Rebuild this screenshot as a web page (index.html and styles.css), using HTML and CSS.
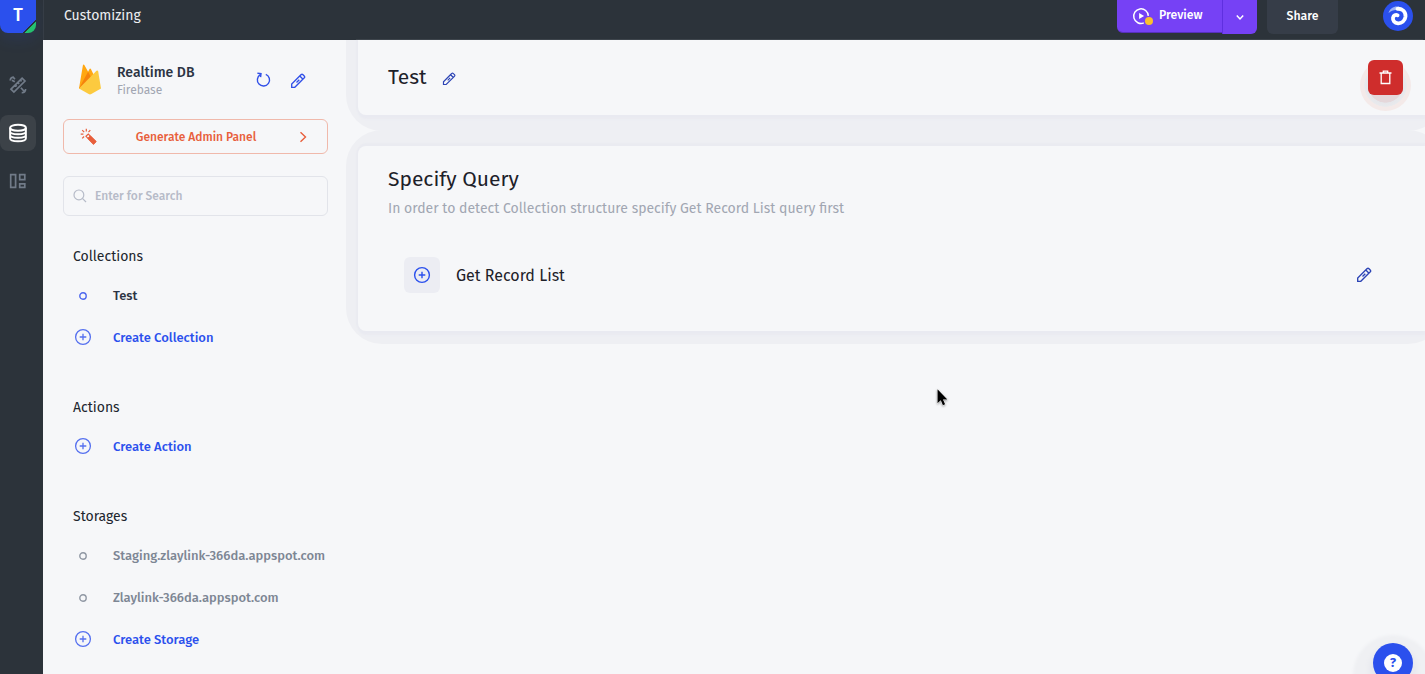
FILE: index.html
```html
<!DOCTYPE html>
<html lang="en">
<head>
<meta charset="utf-8">
<title>Customizing</title>
<link rel="stylesheet" href="styles.css">
</head>
<body>
<svg class="defs" aria-hidden="true">
  <symbol id="plus" viewBox="0 0 18 18"><circle cx="9" cy="9" r="7.4"/><path d="M9 5.700v6.600M5.700 9h6.600"/></symbol>
  <symbol id="bullet" viewBox="0 0 8 8"><circle cx="4" cy="4" r="3.200"/></symbol>
  <symbol id="pencil" viewBox="0 0 16 16"><path d="M1.700 14.300v-3.200L10.200 2.600l1-1q.9-.7 1.800.2l1.200 1.200q.9.900.1 1.800l-1 1-8.500 8.500zM9.800 3.100l3.200 3.200M6.500 9.500l2.800-2.800"/></symbol>
</svg>
<div class="app">
  <nav class="rail">
    <div class="logo"><span class="t">T</span></div>
    <a class="rail-item"><svg width="18" height="18" viewBox="0 0 18 18"><path d="M2 13.200 13.100 2.100l2.900 2.900L4.900 16.100zM6.500 9.100l1.200 1.200M9 6.600l1.200 1.200M11.400 4.200l1.200 1.200M5.800 5.800 2.900 4.200M1.200 4.500q.2-3 3-3.300l1.700 2.100M11.900 11.800l3.200 3.500M12.700 16.700q3.800.2 3.900-3.700"/></svg></a>
    <a class="rail-item active"><svg width="20" height="20" viewBox="0 0 20 20"><ellipse cx="10" cy="4.700" rx="7.900" ry="3"/><path d="M2.100 4.700v10.600c0 4 15.800 4 15.800 0V4.700M2.100 8.200c0 4 15.800 4 15.800 0M2.100 11.800c0 4 15.800 4 15.800 0"/></svg></a>
    <a class="rail-item"><svg width="18" height="16" viewBox="0 0 18 16"><path d="M1.700 1.700h4.900v12.600H1.700zM10.700 1.700h5.100v5h-5.100zM10.700 10.800h5.100v3.500h-5.100z"/></svg></a>
  </nav>
  <div class="main">
    <header class="topbar">
      <span class="crumb">Customizing</span>
      <div class="preview">
        <div class="preview-main">
          <svg width="22" height="20" viewBox="0 0 22 20"><path class="ring" d="M11.800 15.900A7.300 7.300 0 1 1 16.300 8.900"/><path class="play" d="M7.100 6v6l5-3z"/><circle class="dot" cx="17" cy="14" r="4"/></svg>
          <span class="t">Preview</span>
        </div>
        <div class="preview-more"><svg width="10" height="7" viewBox="0 0 10 7"><path d="M1.800 1.400 5 4.900l3.200-3.500"/></svg></div>
      </div>
      <div class="share">Share</div>
      <svg class="avatar" width="30" height="30" viewBox="0 0 30 30"><circle cx="15" cy="15" r="15" fill="#2b50ed"/><path fill="#9db3f8" d="M5.500 12.200C7.500 5.500 14 4 19 7.200L18 10.500C14 8 9 9 5.500 12.200z"/><path class="swirl" d="M14.500 7.800C19.500 7.300 22.800 11 22.500 15.500 22 20 18.500 22.500 15 22.300 11.500 22 9.600 19.500 10 16.700c.4-2.400 2.800-3.400 4.600-2.400"/></svg>
    </header>
    <div class="body">
      <aside class="panel">
        <div class="source">
          <svg class="fire" width="22" height="31" viewBox="0 0 22 31"><path fill="#ffa712" d="M0 24.500 3.900 1.200q.6-1.400 1.600 0l3.600 6.500 1.400-2.800q.7-1 1.400 0L21 24z"/><path fill="#f5820d" d="M0 24.500 9.100 7.700l3.500 6.600z"/><path fill="#fcca3f" d="M0 24.500 17.500 6.700q1.300-.8 1.700.8L22 24.500l-9.700 5.600q-1.300.7-2.600 0z"/></svg>
          <div class="source-text"><span class="source-name">Realtime DB</span><span class="source-type">Firebase</span></div>
          <svg class="reload" width="16" height="16" viewBox="0 0 16 16"><path d="M10.800 2.300A6.100 6.100 0 1 1 5.300 2.700M2.400 1.300 6 1.600 5.600 5.200"/></svg>
          <svg class="pencil" width="16" height="16"><use href="#pencil"/></svg>
        </div>
        <div class="generate">
          <svg class="wand" width="17" height="17" viewBox="0 0 17 17"><path d="m6 8.300 2.300-2.200 7.400 7.500-2.200 2.200zM8.200 10.400l2.200-2.100"/><path class="solid" d="m10.500 8.400 5.200 5.200-2.200 2.200-5.200-5.200z"/><path d="M6.300.7v2.700M.7 6.200h2.700M2.200 2.100l2 2M10.300 2.100l-1.800 2M2.200 10.400l1.900-1.900"/></svg>
          <span class="t">Generate Admin Panel</span>
          <svg class="chev" width="8" height="12" viewBox="0 0 8 12"><path d="m1.500 1.200 5 4.800-5 4.800"/></svg>
        </div>
        <div class="search"><svg width="14" height="14" viewBox="0 0 14 14"><circle cx="5.900" cy="5.900" r="4.900"/><path d="m9.400 9.400 3.600 3.600"/></svg><span class="t">Enter for Search</span></div>
        <section class="group">
          <h3>Collections</h3>
          <div class="row dark"><svg class="bullet" width="8" height="8"><use href="#bullet"/></svg><span class="t">Test</span></div>
          <div class="row create"><svg width="18" height="18"><use href="#plus"/></svg><span class="t">Create Collection</span></div>
        </section>
        <section class="group">
          <h3>Actions</h3>
          <div class="row create"><svg width="18" height="18"><use href="#plus"/></svg><span class="t">Create Action</span></div>
        </section>
        <section class="group">
          <h3>Storages</h3>
          <div class="row"><svg class="bullet" width="8" height="8"><use href="#bullet"/></svg><span class="t">Staging.zlaylink-366da.appspot.com</span></div>
          <div class="row"><svg class="bullet" width="8" height="8"><use href="#bullet"/></svg><span class="t">Zlaylink-366da.appspot.com</span></div>
          <div class="row create"><svg width="18" height="18"><use href="#plus"/></svg><span class="t">Create Storage</span></div>
        </section>
      </aside>
      <main class="content">
        <div class="card title-card">
          <h1>Test</h1>
          <svg class="pencil deep" width="14" height="14"><use href="#pencil"/></svg>
          <div class="delete"><svg width="13" height="15" viewBox="0 0 13 15"><path d="M.5 3h12M4.300 2.600V1.200h4.400v1.400M2.200 3.200v10.300h8.600V3.200"/></svg></div>
        </div>
        <div class="card query-card">
          <h2>Specify Query</h2>
          <p>In order to detect Collection structure specify Get Record List query first</p>
          <div class="query">
            <span class="tile"><svg width="18" height="18"><use href="#plus"/></svg></span>
            <span class="t">Get Record List</span>
            <svg class="pencil deep" width="16" height="16"><use href="#pencil"/></svg>
          </div>
        </div>
      </main>
    </div>
  </div>
  <div class="help"><span>?</span></div>
  <svg class="cursor" width="13" height="19" viewBox="0 0 13 19"><path d="M1.500 1.200v14l3.300-2.900 2.100 4.900 2.200-1-2.100-4.700h4.400z"/></svg>
</div>
</body>
</html>
```
FILE: styles.css
```css
* { box-sizing: border-box; }
body { margin: 0; font-family: "Fira Sans", "Open Sans", "Noto Sans", sans-serif; color: #1d2129; }
h1, h2, h3, p { margin: 0; font-weight: 400; }
svg { flex: none; fill: none; }
.defs { position: absolute; width: 0; height: 0; }
.t { white-space: nowrap; }
.app { position: relative; display: flex; width: 100%; height: 674px; overflow: hidden; background: #f6f7f9; }

.rail { width: 43px; flex: none; display: flex; flex-direction: column; align-items: flex-start; gap: 12px; background: #2c333a; }
.logo { width: 36px; height: 33px; margin-bottom: 22px; border-radius: 0 0 8px 8px; display: flex; align-items: center; justify-content: center; color: #fff; font-size: 18px; font-weight: 500; line-height: 24px; padding-bottom: 3px; background: linear-gradient(135deg, #2b50ed 80%, #2c333a 80%, #2c333a 84%, #25c16f 84%); box-shadow: 0 6px 16px rgba(43, 80, 237, .12); }
.rail-item { width: 36px; height: 36px; border-radius: 8px; display: flex; align-items: center; justify-content: center; }
.rail-item svg { stroke: #717b88; stroke-width: 1.7; }
.rail-item.active { background: #3c4248; }
.rail-item.active svg { stroke: #fff; stroke-width: 1.9; }

.main { flex: 1; min-width: 0; display: flex; flex-direction: column; }
.topbar { height: 40px; flex: none; display: flex; align-items: flex-start; background: #2c333a; color: #fff; border-left: 1px solid #363d46; }
.crumb { flex: 1; padding-left: 20px; font-size: 14px; line-height: 31px; color: #eceef1; }
.preview { display: flex; font-size: 12.3px; font-weight: 500; line-height: 30px; }
.preview-main { width: 105px; height: 33px; display: flex; padding-left: 15px; gap: 5px; background: #7641f5; border-bottom: 1px solid #5730bd; border-radius: 0 0 0 6px; }
.preview-main svg { margin-top: 7px; }
.ring { stroke: #fff; stroke-width: 1.5; }
.play { fill: #fff; }
.dot { fill: #fbc02d; }
.preview-more { width: 35px; height: 34px; display: flex; justify-content: center; padding-top: 14px; background: #7641f5; border-left: 1px solid #5f2fe0; border-radius: 0 0 6px 0; }
.preview-more path { stroke: #fff; stroke-width: 1.5; }
.share { width: 71px; height: 34px; margin-left: 10px; text-align: center; font-size: 12.3px; font-weight: 500; line-height: 31px; background: #363d48; border-radius: 0 0 6px 6px; }
.avatar { margin: 1px 12px 0 45px; }
.swirl { stroke: #fff; stroke-width: 3.8; stroke-linecap: round; }

.body { flex: 1; display: flex; }
.panel { width: 315px; flex: none; padding: 21px 30px 0 20px; }
.source { height: 37px; display: flex; margin: 0 0 21px 16px; }
.fire { margin-top: 3px; }
.source-text { flex: 1; display: flex; flex-direction: column; padding: 2px 0 0 16px; }
.source-name { font-size: 14px; line-height: 20px; font-weight: 500; color: #2c3444; }
.source-type { font-size: 12px; line-height: 15px; color: #a1a6b2; }
.reload { margin-top: 11px; stroke: #3150e8; stroke-width: 1.4; }
.pencil { stroke: #3150e8; stroke-width: 1.35; }
.pencil.deep { stroke: #2b43b5; }
.source .pencil { margin: 12px 22px 0 19px; }
.generate { height: 35px; display: flex; align-items: center; border: 1px solid #f0b9ab; border-radius: 6px; color: #e85f3c; font-size: 12px; font-weight: 500; padding: 0 20px 0 16px; }
.generate .t { flex: 1; text-align: center; padding: 0 26px 0 22px; }
.wand { stroke: #e85f3c; stroke-width: 1.2; }
.wand .solid { fill: #e85f3c; }
.chev { stroke: #e85f3c; stroke-width: 1.4; }
.search { height: 40px; margin-top: 22px; display: flex; align-items: center; gap: 8px; padding-left: 9px; border: 1px solid #e2e4ea; border-radius: 6px; font-size: 12px; font-weight: 500; color: #b6bbc8; }
.search svg { stroke: #b6bbc8; stroke-width: 1.2; }
.group { padding: 30px 0 0 10px; }
.group + .group { padding-top: 39px; }
h3 { font-size: 14px; line-height: 21px; color: #20252d; margin-bottom: 7px; }
.row { height: 42px; display: flex; align-items: center; font-size: 13px; font-weight: 500; color: #7d8694; }
.row > svg { margin: 0 21px 0 1px; }
.row > svg, .tile svg { stroke: #5570ef; stroke-width: 1.3; }
.row > .bullet { margin: 1px 26px 0 6px; stroke: #8f97a3; stroke-width: 1.4; }
.row.dark { color: #2c3444; }
.row.dark .bullet { stroke: #4b66ee; }
.row.create { color: #2b50ed; }
.tile svg { stroke: #2b50ed; stroke-width: 1.4; }

.content { flex: 1; min-width: 0; isolation: isolate; }
.card { position: relative; background: #f6f7f9; }
.card::before { content: ""; position: absolute; z-index: -1; background: #eeeff3; }
.title-card { height: 75px; display: flex; align-items: flex-start; padding: 0 22px 0 30px; border-radius: 0 0 0 8px; box-shadow: -2px 0 1px #eaebf1, 0 4px 2px #e9eaf1; }
.title-card::before { inset: 0 -19px -16px -12px; border-radius: 0 0 36px 36px; }
h1 { font-size: 21px; line-height: 30px; margin-top: 22px; }
.title-card .pencil { margin: 32px auto 0 15px; }
.delete { width: 35px; height: 35px; margin-top: 20px; display: flex; align-items: center; justify-content: center; position: relative; isolation: isolate; }
.delete::before { content: ""; position: absolute; z-index: -2; inset: 0 -8px -16px; border-radius: 50%; background: radial-gradient(closest-side, #e5d7da 66%, #e6e7eb 68%, #e9eaed 82%, #f4eae9 84%); }
.delete::after { content: ""; position: absolute; z-index: -1; inset: 0; border-radius: 6px; background: #cf2d2c; }
.delete svg { stroke: #fff; stroke-width: 1.3; }
.query-card { height: 185px; margin-top: 31px; padding: 17px 53px 0 30px; border-radius: 8px 0 0 8px; box-shadow: -2px 0 1px #eaebf1, 0 4px 2px #e9eaf1, 0 -3px 1px #eaebf1; }
.query-card::before { inset: -16px -19px -13px -12px; border-radius: 36px; }
h2 { font-size: 21px; line-height: 32px; }
p { font-size: 14px; line-height: 24px; color: #a1a6b2; margin-top: 2px; }
.query { display: flex; align-items: center; gap: 16px; margin: 36px 0 0 16px; font-size: 16px; height: 36px; }
.tile { width: 36px; height: 36px; border-radius: 6px; background: #ecedf3; display: flex; align-items: center; justify-content: center; }
.query .pencil { margin-left: auto; }
.help { position: absolute; right: 12px; bottom: -9px; width: 40px; height: 40px; border-radius: 50%; background: #2b50ed; display: flex; align-items: center; justify-content: center; box-shadow: 0 6px 5px 4px #e7e8ee, 0 12px 3px 20px #eff0f3; }
.help span { width: 18px; height: 18px; border-radius: 50%; background: #fff; color: #2b50ed; font-size: 13px; font-weight: 700; line-height: 18px; text-align: center; }
.cursor { position: absolute; left: 936px; top: 388px; fill: #000; stroke: #fff; stroke-width: 1; paint-order: stroke; filter: drop-shadow(0 1px 1px rgba(0, 0, 0, .35)); }
```
